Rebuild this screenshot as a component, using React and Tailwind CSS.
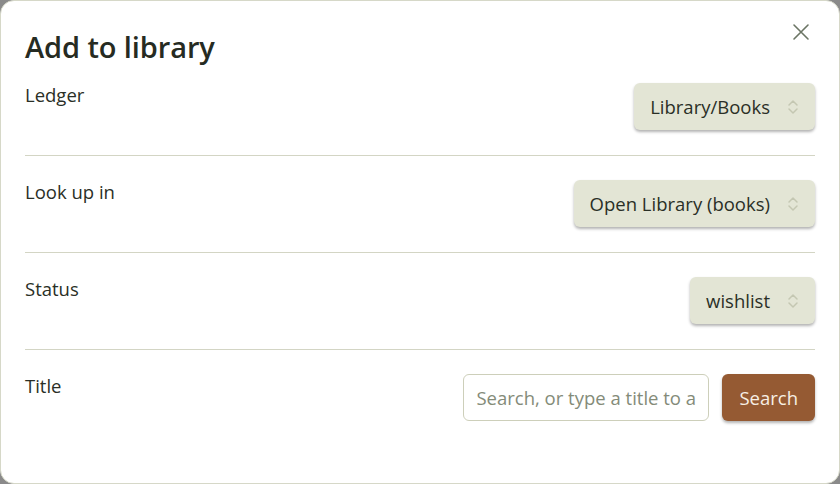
import React from "react";

function Chevrons() {
  return (
    <svg width="12" height="18" viewBox="0 0 12 18" fill="none" stroke="#c4c7b2" strokeWidth="1.5" strokeLinecap="round" strokeLinejoin="round">
      <path d="M2 7l4-4 4 4" />
      <path d="M2 11l4 4 4-4" />
    </svg>
  );
}

function Select({ value }) {
  return (
    <div className="flex items-center h-[47px] pl-[16px] pr-[16px] rounded-[6px] bg-[#e3e5d5] text-[18.5px] text-[#2a2f26] shadow-[0_2px_3px_rgba(0,0,0,0.3)]">
      <span>{value}</span>
      <span className="ml-[17px] flex items-center"><Chevrons /></span>
    </div>
  );
}

function Row({ label, children, first }) {
  return (
    <div className={"flex items-start justify-between pt-[24px] pb-[25px] " + (first ? "" : "border-t border-[#d3d5c4]")}>
      <div className="text-[18.5px] leading-[24px] text-[#2a2f26]">{label}</div>
      <div className="flex items-center gap-[13px]">{children}</div>
    </div>
  );
}

export default function App() {
  return (
    <div className="w-[840px] h-[484px] bg-[#8a8a8a] overflow-hidden" style={{ fontFamily: '"Open Sans", "Noto Sans", sans-serif' }}>
      <div className="relative w-[840px] h-[484px] bg-white rounded-[14px] border border-[#d6d8c8] px-[24px] pt-[24px]">
        <button className="absolute right-[28px] top-[21px] w-[20px] h-[20px] flex items-center justify-center">
          <svg width="18" height="18" viewBox="0 0 18 18" stroke="#6b7564" strokeWidth="1.6" strokeLinecap="round">
            <path d="M2 2l14 14M16 2L2 16" />
          </svg>
        </button>
        <h1 className="text-[29px] leading-[44px] font-semibold text-[#262b22] tracking-[-0.1px]">Add to library</h1>
        <div className="-mt-[10px]">
          <Row label="Ledger" first>
            <Select value="Library/Books" />
          </Row>
          <Row label="Look up in">
            <Select value="Open Library (books)" />
          </Row>
          <Row label="Status">
            <Select value="wishlist" />
          </Row>
          <Row label="Title">
            <div className="w-[246px] h-[47px] rounded-[6px] border border-[#cdcfba] flex items-center pl-[12px] overflow-hidden whitespace-nowrap text-[18.5px] text-[#848b79]">
              Search, or type a title to a
            </div>
            <button className="h-[47px] px-[17px] rounded-[6px] bg-[#955a33] text-[#f7efe4] text-[18.5px] shadow-[0_2px_3px_rgba(0,0,0,0.3)]">Search</button>
          </Row>
        </div>
      </div>
    </div>
  );
}
